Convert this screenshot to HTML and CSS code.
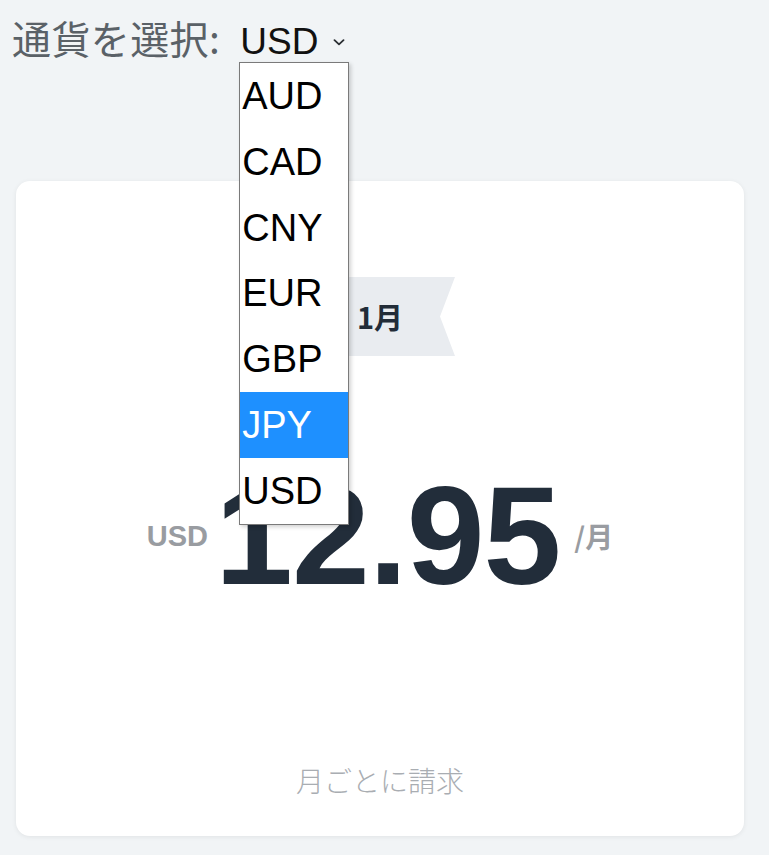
FILE: index.html
```html
<!DOCTYPE html>
<html lang="ja">
<head>
    <meta charset="UTF-8">
    <meta name="viewport" content="width=device-width, initial-scale=1.0">
    <title>料金プラン</title>
    <link rel="stylesheet" href="styles.css">
</head>
<body>
    <div class="currency-bar">
        <label class="currency-label" for="currency">通貨を選択:</label>
        <div class="currency-picker">
            <select class="currency-select" id="currency">
                <option>AUD</option>
                <option>CAD</option>
                <option>CNY</option>
                <option>EUR</option>
                <option>GBP</option>
                <option>JPY</option>
                <option selected>USD</option>
            </select>
            <svg class="chevron" width="12" height="7" viewBox="0 0 12 7">
                <path d="M1.5 1.2 L6 5.4 L10.5 1.2" fill="none" stroke="#2b2f33" stroke-width="1.8" stroke-linecap="round" stroke-linejoin="round"/>
            </svg>
            <ul class="option-list">
                <li>AUD</li>
                <li>CAD</li>
                <li>CNY</li>
                <li>EUR</li>
                <li>GBP</li>
                <li class="active">JPY</li>
                <li>USD</li>
            </ul>
        </div>
    </div>

    <div class="plan-card">
        <div class="ribbon">1月</div>
        <div class="price">
            <span class="price-currency">USD</span>
            <span class="price-amount">12.95</span>
            <span class="price-period">/月</span>
        </div>
        <div class="billing">月ごとに請求</div>
    </div>
</body>
</html>
```

FILE: styles.css
```css
body {
    margin: 0;
    background-color: #f1f4f6;
    font-family: 'Liberation Sans', 'Noto Sans CJK JP', sans-serif;
    height: 855px;
    overflow: hidden;
}
.currency-bar {
    display: flex;
    align-items: baseline;
    padding: 18px 0 0 12px;
    height: 44px;
}
.currency-label {
    font-family: 'Noto Sans CJK JP', sans-serif;
    font-size: 39px;
    line-height: 1;
    color: #5a6167;
    letter-spacing: 0.4px;
    margin-right: 19px;
}
.currency-picker {
    position: relative;
    display: flex;
    align-items: center;
}
.currency-select {
    appearance: none;
    -webkit-appearance: none;
    border: none;
    background: transparent;
    font-family: 'Liberation Sans', sans-serif;
    font-size: 37px;
    line-height: 1;
    color: #111111;
    padding: 0 0 0 1px;
    margin: 0;
    width: 93px;
}
.chevron {
    margin-left: 1px;
    margin-top: 1px;
}
.option-list {
    position: absolute;
    top: 39px;
    left: 0;
    width: 108px;
    margin: 0;
    padding: 0;
    list-style: none;
    background-color: #ffffff;
    border: 1px solid #7a7a7a;
    box-shadow: 2px 2px 4px rgba(0, 0, 0, 0.18);
    z-index: 10;
}
.option-list li {
    height: 65.8px;
    line-height: 67px;
    padding-left: 2px;
    font-size: 38px;
    color: #000000;
}
.option-list li.active {
    background-color: #1e90ff;
    color: #ffffff;
}
.plan-card {
    display: flex;
    flex-direction: column;
    align-items: center;
    box-sizing: border-box;
    width: 728px;
    height: 655px;
    margin: 119px 0 0 16px;
    padding: 96px 0 42px;
    background-color: #ffffff;
    border-radius: 14px;
    box-shadow: 0 1px 5px rgba(0, 0, 0, 0.07);
}
.ribbon {
    width: 150px;
    height: 79px;
    line-height: 79px;
    text-align: center;
    background-color: #e9ecf0;
    clip-path: polygon(0 0, 100% 0, 90% 50%, 100% 100%, 0 100%);
    font-family: 'Noto Sans CJK JP', sans-serif;
    font-weight: bold;
    font-size: 29px;
    color: #222c38;
}
.price {
    display: flex;
    align-items: center;
    margin-top: 110px;
    height: 140px;
}
.price-currency {
    font-size: 29px;
    font-weight: bold;
    color: #999ca1;
    margin-right: 7px;
}
.price-amount {
    font-size: 140px;
    line-height: 1;
    font-weight: bold;
    color: #222d3a;
    letter-spacing: -1px;
}
.price-period {
    font-family: 'Noto Sans CJK JP', sans-serif;
    font-size: 28px;
    font-weight: bold;
    color: #999ca1;
    margin-left: 14px;
}
.billing {
    margin-top: auto;
    font-family: 'Noto Sans CJK JP', sans-serif;
    font-size: 28px;
    line-height: 1;
    font-weight: 300;
    color: #a9adb2;
}
```
